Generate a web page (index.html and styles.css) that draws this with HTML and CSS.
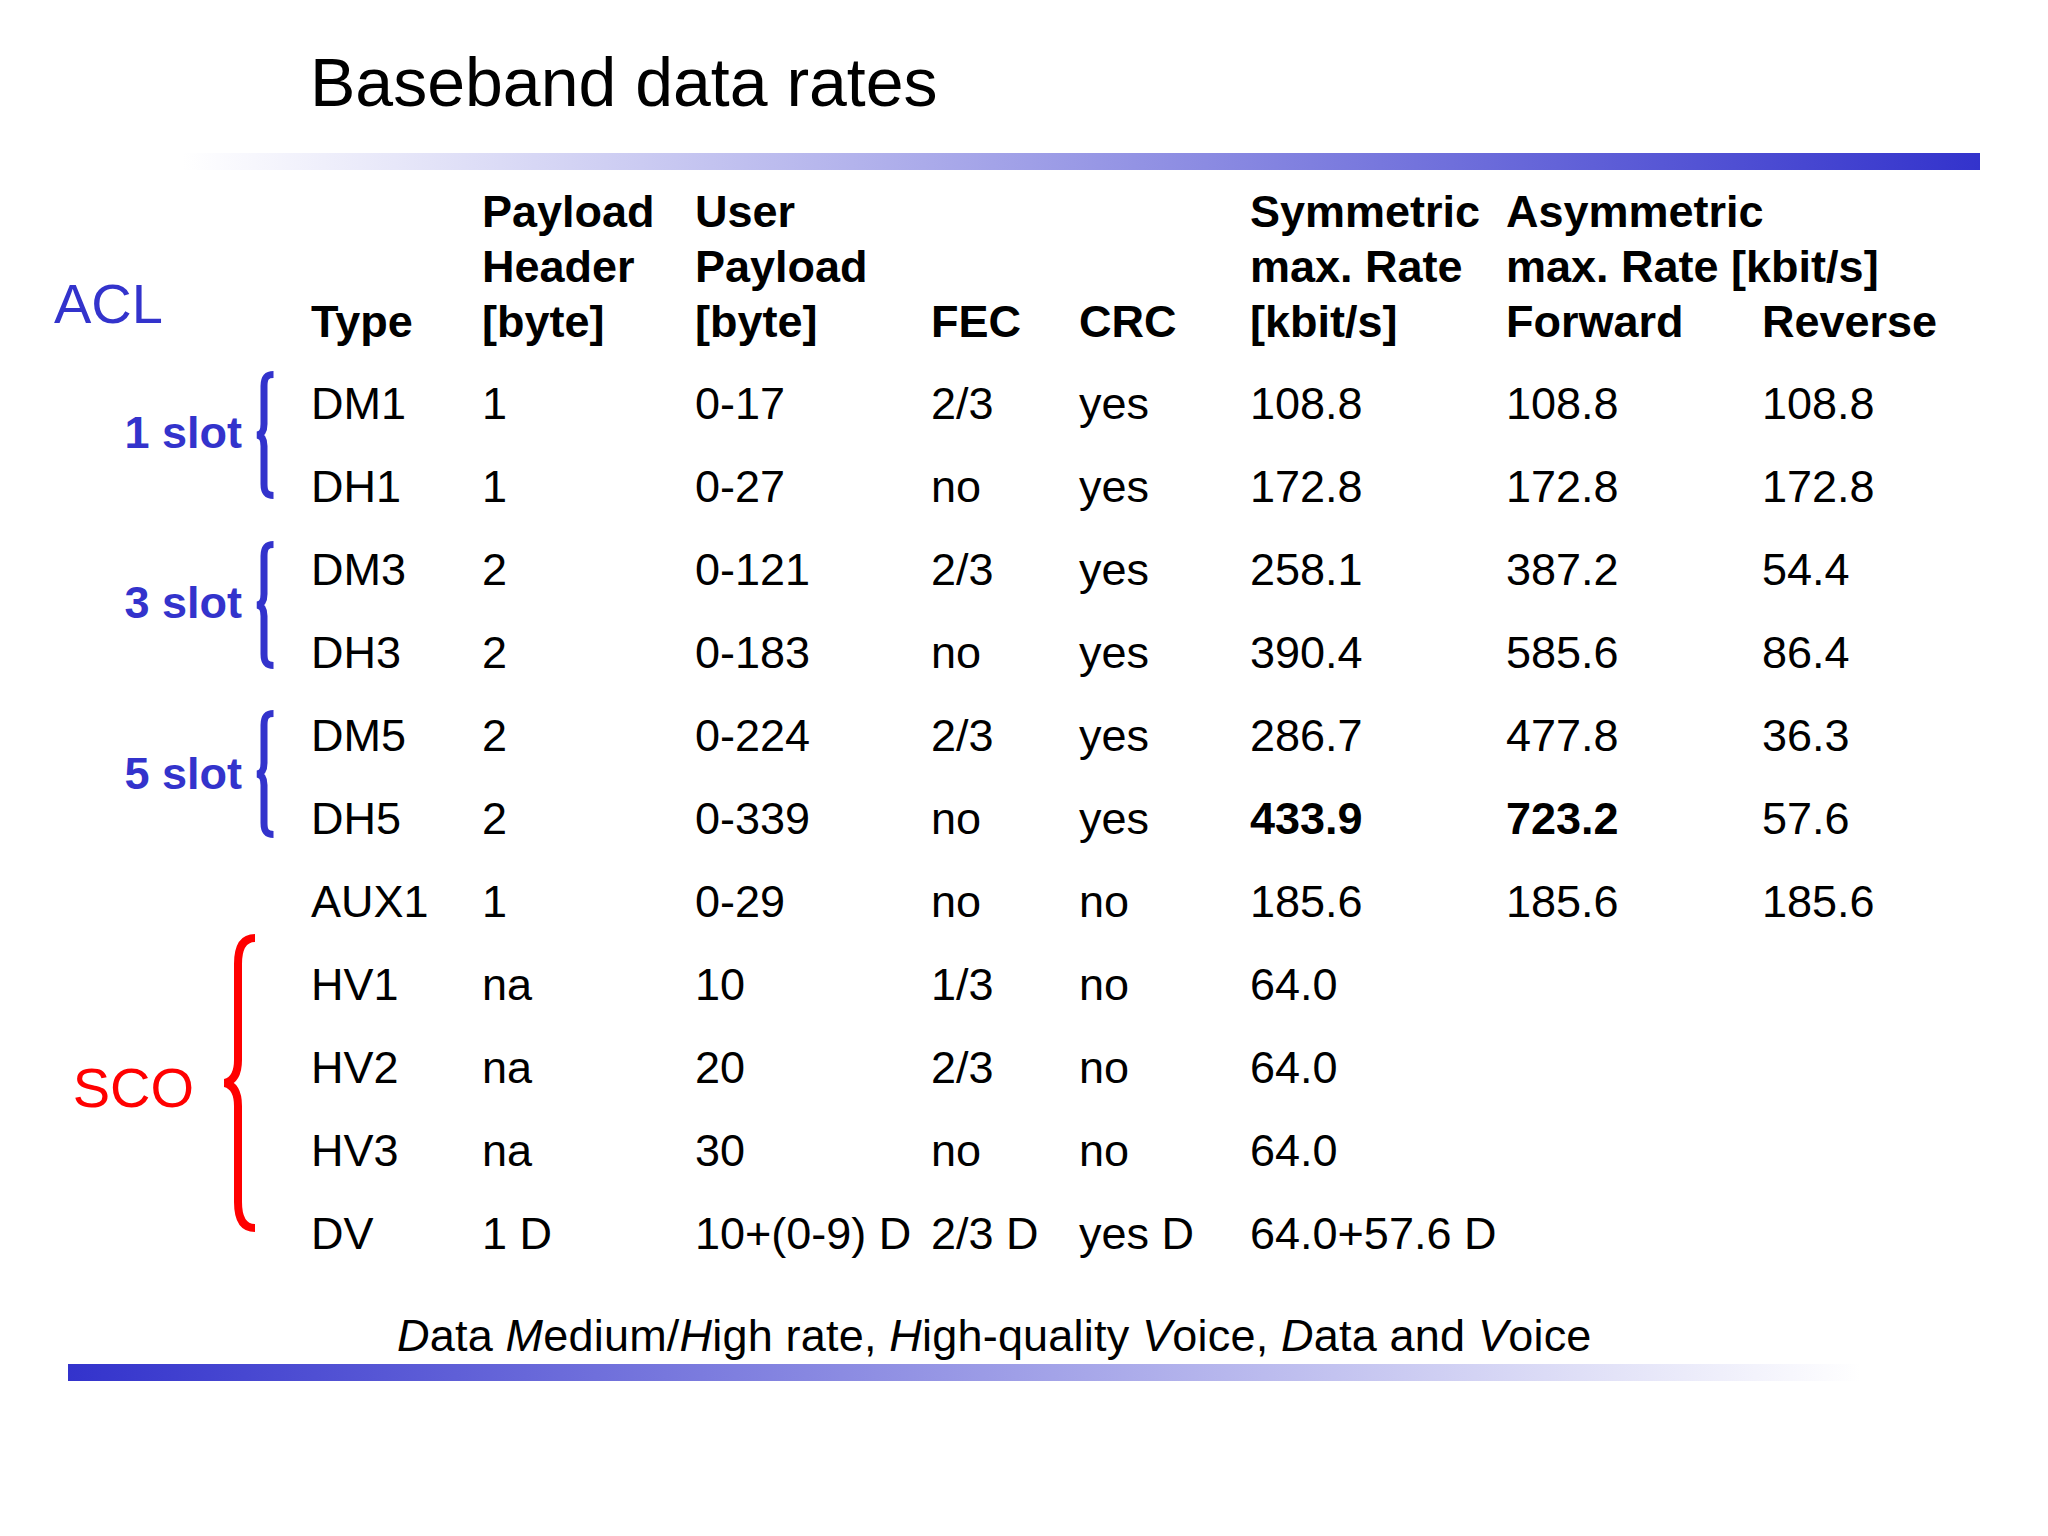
FILE: index.html
```html
<!DOCTYPE html>
<html>
<head>
<meta charset="utf-8">
<link rel="stylesheet" href="styles.css">
</head>
<body>
<div class="slide">
  <h1 class="title">Baseband data rates</h1>
  <div class="bar bar-top"></div>

  <div class="grid thead">
    <div class="acl">ACL</div>
    <div class="th c2 one">Type</div>
    <div class="th c3">Payload<br>Header<br>[byte]</div>
    <div class="th c4">User<br>Payload<br>[byte]</div>
    <div class="th c5 one">FEC</div>
    <div class="th c6 one">CRC</div>
    <div class="th c7">Symmetric<br>max. Rate<br>[kbit/s]</div>
    <div class="th asym">Asymmetric<br>max. Rate [kbit/s]</div>
    <div class="th c8 one">Forward</div>
    <div class="th c9 one">Reverse</div>
  </div>

  <div class="grid tbody">
    <div class="group blue g1"><span class="glabel">1 slot</span>
      <svg class="brace-b" width="18" height="128" viewBox="0 0 18 128"><path d="M17.5,3.5 C10,3.5 8,7 8,15 L8,53 C8,60 6,63 1.5,64 C6,65 8,68 8,75 L8,113 C8,121 10,124.5 17.5,124.5"/></svg>
    </div>
    <div class="group blue g3"><span class="glabel">3 slot</span>
      <svg class="brace-b" width="18" height="128" viewBox="0 0 18 128"><path d="M17.5,3.5 C10,3.5 8,7 8,15 L8,53 C8,60 6,63 1.5,64 C6,65 8,68 8,75 L8,113 C8,121 10,124.5 17.5,124.5"/></svg>
    </div>
    <div class="group blue g5"><span class="glabel">5 slot</span>
      <svg class="brace-b" width="18" height="128" viewBox="0 0 18 128"><path d="M17.5,3.5 C10,3.5 8,7 8,15 L8,53 C8,60 6,63 1.5,64 C6,65 8,68 8,75 L8,113 C8,121 10,124.5 17.5,124.5"/></svg>
    </div>
    <div class="group red gsco"><span class="glabel">SCO</span>
      <svg class="brace-r" width="34" height="298" viewBox="0 0 34 298"><path d="M33,4 C22,4 16,12 16,30 L16,126 C16,140 11,147 3,149 C11,151 16,158 16,172 L16,268 C16,286 22,294 33,294"/></svg>
    </div>

    <div class="t">DM1</div><div>1</div><div>0-17</div><div>2/3</div><div>yes</div><div>108.8</div><div>108.8</div><div>108.8</div>
    <div class="t">DH1</div><div>1</div><div>0-27</div><div>no</div><div>yes</div><div>172.8</div><div>172.8</div><div>172.8</div>
    <div class="t">DM3</div><div>2</div><div>0-121</div><div>2/3</div><div>yes</div><div>258.1</div><div>387.2</div><div>54.4</div>
    <div class="t">DH3</div><div>2</div><div>0-183</div><div>no</div><div>yes</div><div>390.4</div><div>585.6</div><div>86.4</div>
    <div class="t">DM5</div><div>2</div><div>0-224</div><div>2/3</div><div>yes</div><div>286.7</div><div>477.8</div><div>36.3</div>
    <div class="t">DH5</div><div>2</div><div>0-339</div><div>no</div><div>yes</div><div class="b">433.9</div><div class="b">723.2</div><div>57.6</div>
    <div class="t">AUX1</div><div>1</div><div>0-29</div><div>no</div><div>no</div><div>185.6</div><div>185.6</div><div>185.6</div>
    <div class="t">HV1</div><div>na</div><div>10</div><div>1/3</div><div>no</div><div>64.0</div>
    <div class="t">HV2</div><div>na</div><div>20</div><div>2/3</div><div>no</div><div>64.0</div>
    <div class="t">HV3</div><div>na</div><div>30</div><div>no</div><div>no</div><div>64.0</div>
    <div class="t">DV</div><div>1 D</div><div class="nw">10+(0-9) D</div><div>2/3 D</div><div>yes D</div><div class="nw">64.0+57.6 D</div>
  </div>

  <p class="foot"><em>D</em>ata <em>M</em>edium/<em>H</em>igh rate, <em>H</em>igh-quality <em>V</em>oice, <em>D</em>ata and <em>V</em>oice</p>
  <div class="bar bar-bottom"></div>
</div>
</body>
</html>
```

FILE: styles.css
```css
html, body {
  margin: 0;
  padding: 0;
  background: #ffffff;
}

.slide {
  width: 2048px;
  height: 1536px;
  overflow: hidden;
  background: #ffffff;
  color: #000000;
  font-family: "Liberation Sans", Arial, sans-serif;
}

.title {
  margin: 48px 0 0 310px;
  font-size: 68px;
  line-height: 68px;
  font-weight: normal;
}

.bar {
  height: 17px;
}

.bar-top {
  margin: 37px 0 0 183px;
  width: 1797px;
  background: linear-gradient(to right, #ffffff 0%, #3333cc 100%);
}

.bar-bottom {
  margin: 3px 0 0 68px;
  width: 1793px;
  background: linear-gradient(to right, #3333cc 0%, #ffffff 100%);
}

.grid {
  display: grid;
  grid-template-columns: 311px 171px 213px 236px 148px 171px 256px 256px 1fr;
}

.thead {
  margin-top: 14px;
  grid-template-rows: repeat(3, 55px);
  font-size: 45px;
  line-height: 55px;
  font-weight: bold;
}

.th {
  grid-row: 1 / span 3;
  align-self: end;
  white-space: nowrap;
}

.th.one {
  grid-row: 3;
}

.c2 { grid-column: 2; }
.c3 { grid-column: 3; }
.c4 { grid-column: 4; }
.c5 { grid-column: 5; }
.c6 { grid-column: 6; }
.c7 { grid-column: 7; }
.c8 { grid-column: 8; }
.c9 { grid-column: 9; }

.asym {
  grid-column: 8 / span 2;
  grid-row: 1 / span 2;
}

.acl {
  grid-column: 1;
  grid-row: 1 / span 3;
  align-self: end;
  margin-bottom: 18px;
  padding-left: 54px;
  font-size: 56px;
  line-height: 55px;
  font-weight: normal;
  color: #3333cc;
}

.tbody {
  margin-top: 13px;
  grid-auto-rows: 83px;
  font-size: 45px;
  line-height: 83px;
}

.tbody .t {
  grid-column-start: 2;
}

.nw {
  white-space: nowrap;
}

.b {
  font-weight: bold;
}

.group {
  grid-column: 1;
  display: flex;
  align-items: center;
  justify-content: flex-end;
}

.g1 { grid-row: 1 / span 2; }
.g3 { grid-row: 3 / span 2; }
.g5 { grid-row: 5 / span 2; }
.gsco { grid-row: 8 / span 4; }

.glabel {
  line-height: 1;
}

.blue {
  padding: 0 37px 20px 0;
  gap: 14px;
  color: #3333cc;
  font-weight: bold;
}

.blue .glabel {
  margin-bottom: 6px;
}

.blue.g3 {
  padding-bottom: 12px;
}

.blue.g5 {
  padding-bottom: 6px;
}

.blue.g5 .glabel {
  margin-bottom: 2px;
}

.red {
  padding: 0 55px 52px 0;
  gap: 28px;
  color: #ff0000;
  font-size: 56px;
}

.red .glabel {
  margin-top: 10px;
}

.brace-b path {
  fill: none;
  stroke: #3333cc;
  stroke-width: 7;
}

.brace-r path {
  fill: none;
  stroke: #ff0000;
  stroke-width: 8;
}

.foot {
  margin: 36px 0 0 397px;
  font-size: 45px;
  line-height: 50px;
  letter-spacing: 0.2px;
}

.foot em {
  font-style: italic;
}
```
